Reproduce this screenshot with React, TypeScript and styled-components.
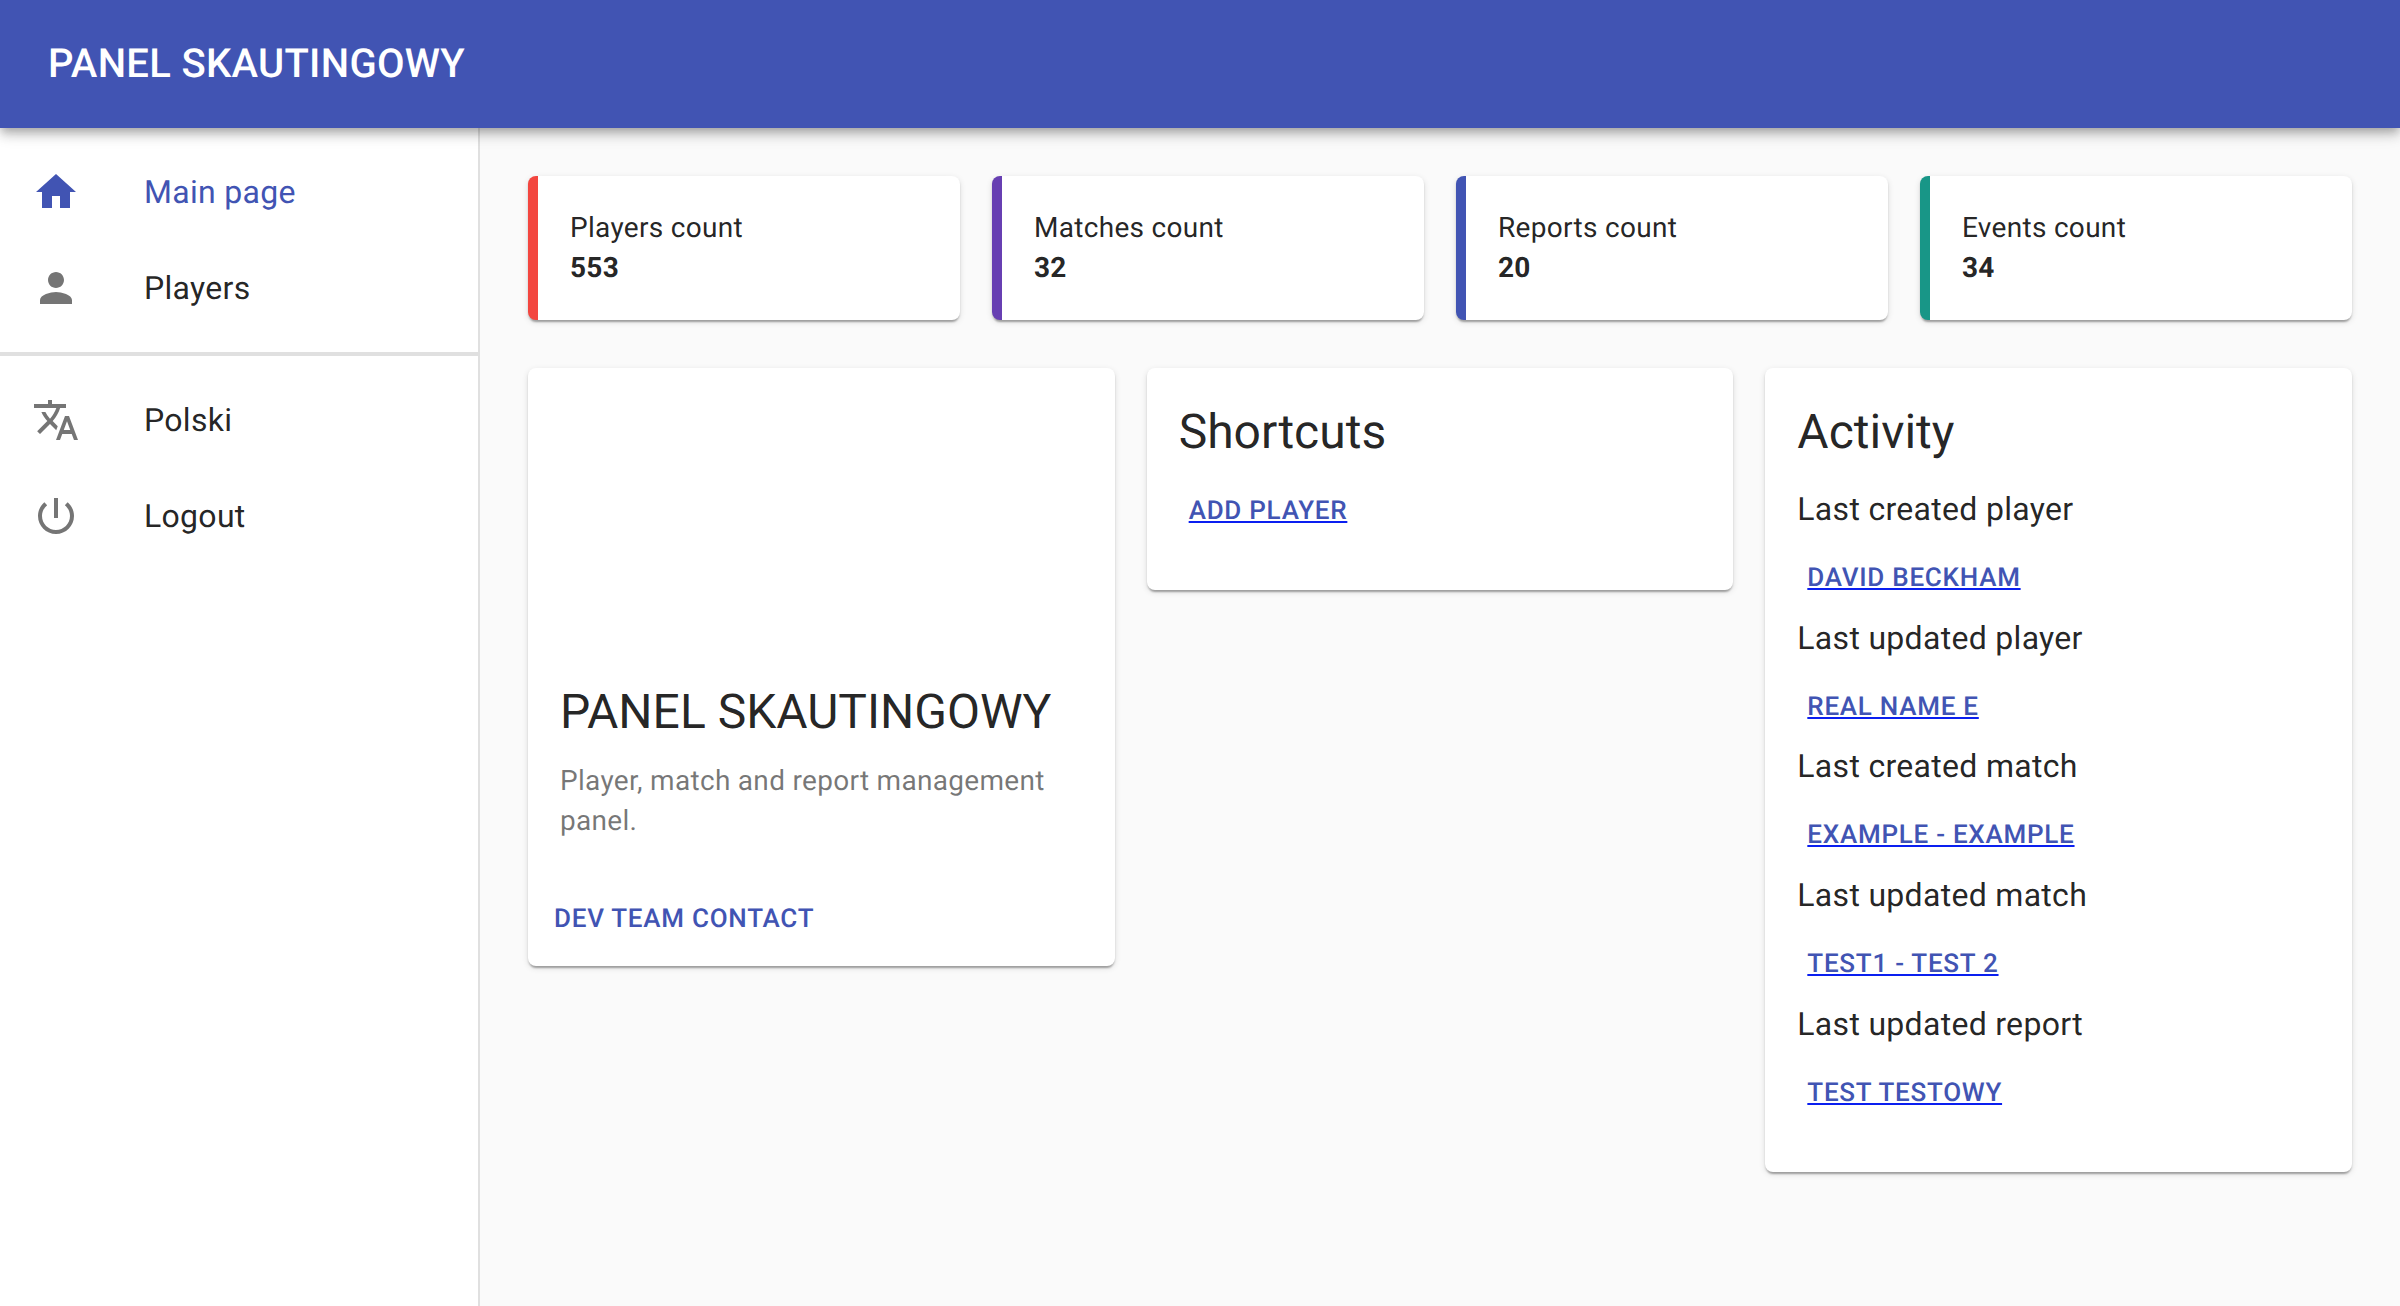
import React from 'react';
import styled, { createGlobalStyle } from 'styled-components';

const indigo = '#4154b3';
const textPrimary = 'rgba(0, 0, 0, 0.87)';
const textSecondary = 'rgba(0, 0, 0, 0.54)';
const divider = '#e0e0e0';

const GlobalStyle = createGlobalStyle`
  *, *::before, *::after {
    box-sizing: border-box;
  }

  body {
    margin: 0;
    background: #fafafa;
    color: ${textPrimary};
    font-family: Roboto, 'Liberation Sans', sans-serif;
    -webkit-font-smoothing: antialiased;
    text-rendering: geometricPrecision;
  }
`;

const Page = styled.div`
  display: flex;
  flex-direction: column;
  height: 1306px;
  overflow: hidden;
`;

const AppBar = styled.header`
  position: relative;
  z-index: 1;
  display: flex;
  flex: none;
  align-items: center;
  height: 128px;
  padding: 0 48px;
  background: ${indigo};
  color: #fff;
  box-shadow: 0 4px 8px -2px rgba(0, 0, 0, 0.2), 0 8px 10px 0 rgba(0, 0, 0, 0.14),
    0 2px 20px 0 rgba(0, 0, 0, 0.12);
`;

const AppTitle = styled.h1`
  margin: 0;
  font-size: 40px;
  font-weight: 500;
  line-height: 1.6;
  letter-spacing: 0.0075em;
`;

const Body = styled.div`
  display: flex;
  flex: 1;
  min-height: 0;
`;

const Drawer = styled.nav`
  flex: none;
  width: 480px;
  background: #fff;
  border-right: 2px solid ${divider};
`;

const NavList = styled.ul`
  margin: 0;
  padding: 16px 0;
  list-style: none;

  & + & {
    border-top: 4px solid ${divider};
  }
`;

const NavItem = styled.li<{ $active?: boolean }>`
  display: flex;
  align-items: center;
  height: 96px;
  padding: 0 32px;
  font-size: 32px;
  line-height: 1.5;
  letter-spacing: 0.00938em;
  color: ${(p) => (p.$active ? indigo : textPrimary)};

  svg {
    flex: none;
    width: 48px;
    height: 48px;
    margin-right: 64px;
    fill: ${(p) => (p.$active ? indigo : textSecondary)};
  }
`;

const Main = styled.main`
  display: flex;
  flex: 1;
  flex-direction: column;
  gap: 48px;
  padding: 48px;
`;

const Grid = styled.div<{ $columns: number }>`
  display: grid;
  grid-template-columns: repeat(${(p) => p.$columns}, 1fr);
  align-items: start;
  gap: 32px;
`;

const Card = styled.section`
  overflow: hidden;
  background: #fff;
  border-radius: 8px;
  box-shadow: 0 4px 2px -2px rgba(0, 0, 0, 0.2), 0 2px 2px 0 rgba(0, 0, 0, 0.14),
    0 2px 6px 0 rgba(0, 0, 0, 0.12);
`;

const StatCard = styled(Card)<{ $accent: string }>`
  height: 144px;
  padding: 32px;
  border-left: 10px solid ${(p) => p.$accent};
`;

const Text = styled.p<{ $bold?: boolean; $muted?: boolean }>`
  margin: 0;
  font-size: 28px;
  font-weight: ${(p) => (p.$bold ? 700 : 400)};
  line-height: 1.43;
  letter-spacing: 0.01071em;
  color: ${(p) => (p.$muted ? textSecondary : 'inherit')};
`;

const Media = styled.div`
  height: 280px;
`;

const CardContent = styled.div`
  padding: 32px;

  &:last-child {
    padding-bottom: 48px;
  }
`;

const CardActions = styled.div`
  display: flex;
  padding: 16px;
`;

const Heading = styled.h2`
  margin: 0 0 0.35em;
  font-size: 48px;
  font-weight: 400;
  line-height: 1.334;
  letter-spacing: 0;
`;

const Subtitle = styled.h3`
  margin: 0 0 0.35em;
  font-size: 32px;
  font-weight: 400;
  line-height: 1.75;
  letter-spacing: 0.00938em;
`;

const TextButton = styled.a`
  display: block;
  width: fit-content;
  padding: 8px 10px;
  font-size: 26px;
  font-weight: 500;
  line-height: 1.75;
  letter-spacing: 0.02857em;
  text-transform: uppercase;
  color: ${indigo};
`;

const LinkButton = styled(TextButton)`
  text-decoration: underline 2px #0a1ff0;
  text-underline-offset: 2px;
`;

const icons = {
  home: 'M10 20v-6h4v6h5v-8h3L12 3 2 12h3v8z',
  person:
    'M12 12c2.21 0 4-1.79 4-4s-1.79-4-4-4-4 1.79-4 4 1.79 4 4 4zm0 2c-2.67 0-8 1.34-8 4v2h16v-2c0-2.66-5.33-4-8-4z',
  translate:
    'M12.87 15.07l-2.54-2.51.03-.03c1.74-1.94 2.98-4.17 3.71-6.53H17V4h-7V2H8v2H1v1.99h11.17C11.5 7.92 10.44 9.75 9 11.35 8.07 10.32 7.3 9.19 6.69 8h-2c.73 1.63 1.73 3.17 2.98 4.56l-5.09 5.02L4 19l5-5 3.11 3.11.76-2.04zM18.5 10h-2L12 22h2l1.12-3h4.75L21 22h2l-4.5-12zm-2.62 7l1.62-4.33L19.12 17h-3.24z',
  power:
    'M13 3h-2v10h2V3zm4.83 2.17l-1.42 1.42C17.99 7.86 19 9.81 19 12c0 3.87-3.13 7-7 7s-7-3.13-7-7c0-2.19 1.01-4.14 2.58-5.42L6.17 5.17C4.23 6.82 3 9.26 3 12c0 4.97 4.03 9 9 9s9-4.03 9-9c0-2.74-1.23-5.18-3.17-6.83z',
};

function Icon({ name }: { name: keyof typeof icons }) {
  return (
    <svg viewBox="0 0 24 24" aria-hidden="true">
      <path d={icons[name]} />
    </svg>
  );
}

const stats = [
  { label: 'Players count', value: 553, accent: '#f3463f' },
  { label: 'Matches count', value: 32, accent: '#673fb2' },
  { label: 'Reports count', value: 20, accent: indigo },
  { label: 'Events count', value: 34, accent: '#189687' },
];

const activity = [
  { label: 'Last created player', link: 'David Beckham' },
  { label: 'Last updated player', link: 'Real Name E' },
  { label: 'Last created match', link: 'Example - Example' },
  { label: 'Last updated match', link: 'Test1 - Test 2' },
  { label: 'Last updated report', link: 'Test Testowy' },
];

export default function App() {
  return (
    <Page>
      <GlobalStyle />
      <AppBar>
        <AppTitle>PANEL SKAUTINGOWY</AppTitle>
      </AppBar>
      <Body>
        <Drawer>
          <NavList>
            <NavItem $active>
              <Icon name="home" />
              Main page
            </NavItem>
            <NavItem>
              <Icon name="person" />
              Players
            </NavItem>
          </NavList>
          <NavList>
            <NavItem>
              <Icon name="translate" />
              Polski
            </NavItem>
            <NavItem>
              <Icon name="power" />
              Logout
            </NavItem>
          </NavList>
        </Drawer>
        <Main>
          <Grid $columns={4}>
            {stats.map((stat) => (
              <StatCard key={stat.label} $accent={stat.accent}>
                <Text>{stat.label}</Text>
                <Text $bold>{stat.value}</Text>
              </StatCard>
            ))}
          </Grid>
          <Grid $columns={3}>
            <Card>
              <Media />
              <CardContent>
                <Heading>PANEL SKAUTINGOWY</Heading>
                <Text $muted>Player, match and report management panel.</Text>
              </CardContent>
              <CardActions>
                <TextButton>Dev team contact</TextButton>
              </CardActions>
            </Card>
            <Card>
              <CardContent>
                <Heading>Shortcuts</Heading>
                <LinkButton>Add player</LinkButton>
              </CardContent>
            </Card>
            <Card>
              <CardContent>
                <Heading>Activity</Heading>
                {activity.map((item) => (
                  <React.Fragment key={item.label}>
                    <Subtitle>{item.label}</Subtitle>
                    <LinkButton>{item.link}</LinkButton>
                  </React.Fragment>
                ))}
              </CardContent>
            </Card>
          </Grid>
        </Main>
      </Body>
    </Page>
  );
}
